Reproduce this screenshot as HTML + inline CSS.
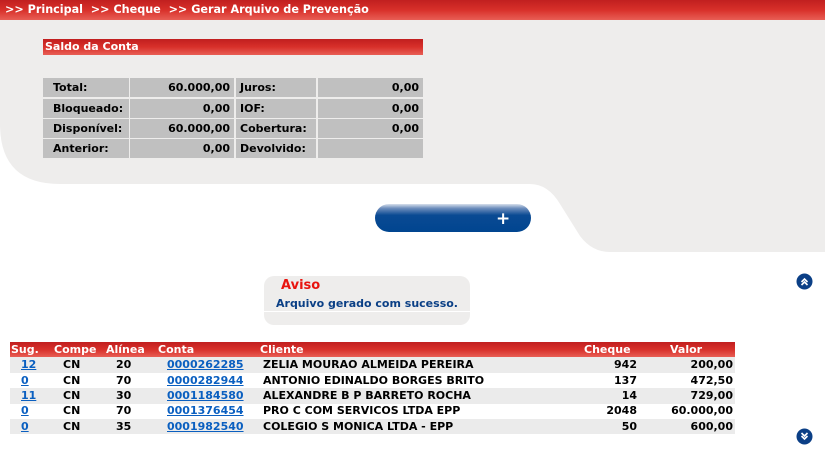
<!DOCTYPE html>
<html><head><meta charset="utf-8"><style>
*{margin:0;padding:0;box-sizing:border-box}
body{width:825px;height:457px;overflow:hidden;background:#fff;font-family:"DejaVu Sans","Liberation Sans",sans-serif;font-weight:bold;font-size:11px;color:#000;position:relative}
.a{position:absolute;white-space:nowrap}
.red{background:linear-gradient(#c11f1f,#d8302a 50%,#e85e55);color:#fff}
.r{text-align:right}
.cell{position:absolute;background:#c0c0c0;height:19px;line-height:19px;padding:0 4px}
a{color:#0a5fc0;text-decoration:underline}
.row{position:absolute;left:10px;width:725px;height:16px;line-height:16px}
</style></head><body>
<svg class="a" style="left:0;top:0" width="825" height="260">
<path d="M0 20 H825 V252 H610 Q592 252 580 236 L560 204 Q548 184 530 184 H60 Q0 184 0 124 Z" fill="#eeedec"/>
</svg>
<div class="a red" style="left:0;top:0;width:825px;height:20px;line-height:20px;padding-left:5px;font-size:11.2px">&gt;&gt; Principal &nbsp;&gt;&gt; Cheque &nbsp;&gt;&gt; Gerar Arquivo de Prevenção</div>
<div class="a red" style="left:43px;top:39px;width:380px;height:16px;line-height:16px;padding-left:2px">Saldo da Conta</div>

<div class="cell" style="left:43px;top:78px;width:86px;padding-left:10px">Total:</div>
<div class="cell r" style="left:130px;top:78px;width:104px">60.000,00</div>
<div class="cell" style="left:236px;top:78px;width:80px">Juros:</div>
<div class="cell r" style="left:318px;top:78px;width:105px">0,00</div>
<div class="cell" style="left:43px;top:99px;width:86px;padding-left:10px">Bloqueado:</div>
<div class="cell r" style="left:130px;top:99px;width:104px">0,00</div>
<div class="cell" style="left:236px;top:99px;width:80px">IOF:</div>
<div class="cell r" style="left:318px;top:99px;width:105px">0,00</div>
<div class="cell" style="left:43px;top:119px;width:86px;padding-left:10px">Disponível:</div>
<div class="cell r" style="left:130px;top:119px;width:104px">60.000,00</div>
<div class="cell" style="left:236px;top:119px;width:80px">Cobertura:</div>
<div class="cell r" style="left:318px;top:119px;width:105px">0,00</div>
<div class="cell" style="left:43px;top:139px;width:86px;padding-left:10px">Anterior:</div>
<div class="cell r" style="left:130px;top:139px;width:104px">0,00</div>
<div class="cell" style="left:236px;top:139px;width:80px">Devolvido:</div>
<div class="cell r" style="left:318px;top:139px;width:105px"></div>

<div class="a" style="left:375px;top:204px;width:156px;height:28px;border-radius:14px;background:linear-gradient(#d8e0ec,#6f8fbd 15%,#0a4a93 40%,#004590)"></div>
<div class="a" style="left:496px;top:210px;color:#fff;font-size:17px;line-height:18px">+</div>

<div class="a" style="left:264px;top:276px;width:206px;height:49px;border-radius:10px;background:#eeedec"></div>
<div class="a" style="left:264px;top:311px;width:206px;height:1px;background:#fff"></div>
<div class="a" style="left:281px;top:278px;color:#e8140f;font-size:13px">Aviso</div>
<div class="a" style="left:276px;top:297px;color:#0a3f85">Arquivo gerado com sucesso.</div>

<svg class="a" style="left:796px;top:273px" width="17" height="17"><circle cx="8.5" cy="8.5" r="8" fill="#0b3f86"/><path d="M5.5 9 L8.5 6 L11.5 9 M5.5 12 L8.5 9 L11.5 12" stroke="#fff" stroke-width="1.6" fill="none"/></svg>
<svg class="a" style="left:796px;top:428px" width="17" height="17"><circle cx="8.5" cy="8.5" r="8" fill="#0b3f86"/><path d="M5.5 5 L8.5 8 L11.5 5 M5.5 8 L8.5 11 L11.5 8" stroke="#fff" stroke-width="1.6" fill="none"/></svg>

<div class="row red" style="top:342px;height:15px;line-height:15px">
<span class="a" style="left:1px">Sug.</span><span class="a" style="left:44px">Compe</span><span class="a" style="left:96px">Alínea</span><span class="a" style="left:148px">Conta</span><span class="a" style="left:250px">Cliente</span><span class="a" style="left:574px">Cheque</span><span class="a" style="left:660px">Valor</span></div>

<div class="row" style="top:357px;background:#ebebeb"><a class="a" style="left:11px">12</a><span class="a" style="left:53px">CN</span><span class="a" style="left:106px">20</span><a class="a" style="left:157px">0000262285</a><span class="a" style="left:253px">ZELIA MOURAO ALMEIDA PEREIRA</span><span class="a r" style="right:98px">942</span><span class="a r" style="right:2px">200,00</span></div>
<div class="row" style="top:373px"><a class="a" style="left:11px">0</a><span class="a" style="left:53px">CN</span><span class="a" style="left:106px">70</span><a class="a" style="left:157px">0000282944</a><span class="a" style="left:253px">ANTONIO EDINALDO BORGES BRITO</span><span class="a r" style="right:98px">137</span><span class="a r" style="right:2px">472,50</span></div>
<div class="row" style="top:388px;background:#ebebeb"><a class="a" style="left:11px">11</a><span class="a" style="left:53px">CN</span><span class="a" style="left:106px">30</span><a class="a" style="left:157px">0001184580</a><span class="a" style="left:253px">ALEXANDRE B P BARRETO ROCHA</span><span class="a r" style="right:98px">14</span><span class="a r" style="right:2px">729,00</span></div>
<div class="row" style="top:403px"><a class="a" style="left:11px">0</a><span class="a" style="left:53px">CN</span><span class="a" style="left:106px">70</span><a class="a" style="left:157px">0001376454</a><span class="a" style="left:253px">PRO C COM SERVICOS LTDA EPP</span><span class="a r" style="right:98px">2048</span><span class="a r" style="right:2px">60.000,00</span></div>
<div class="row" style="top:419px;background:#ebebeb;height:15px"><a class="a" style="left:11px">0</a><span class="a" style="left:53px">CN</span><span class="a" style="left:106px">35</span><a class="a" style="left:157px">0001982540</a><span class="a" style="left:253px">COLEGIO S MONICA LTDA - EPP</span><span class="a r" style="right:98px">50</span><span class="a r" style="right:2px">600,00</span></div>
</body></html>
